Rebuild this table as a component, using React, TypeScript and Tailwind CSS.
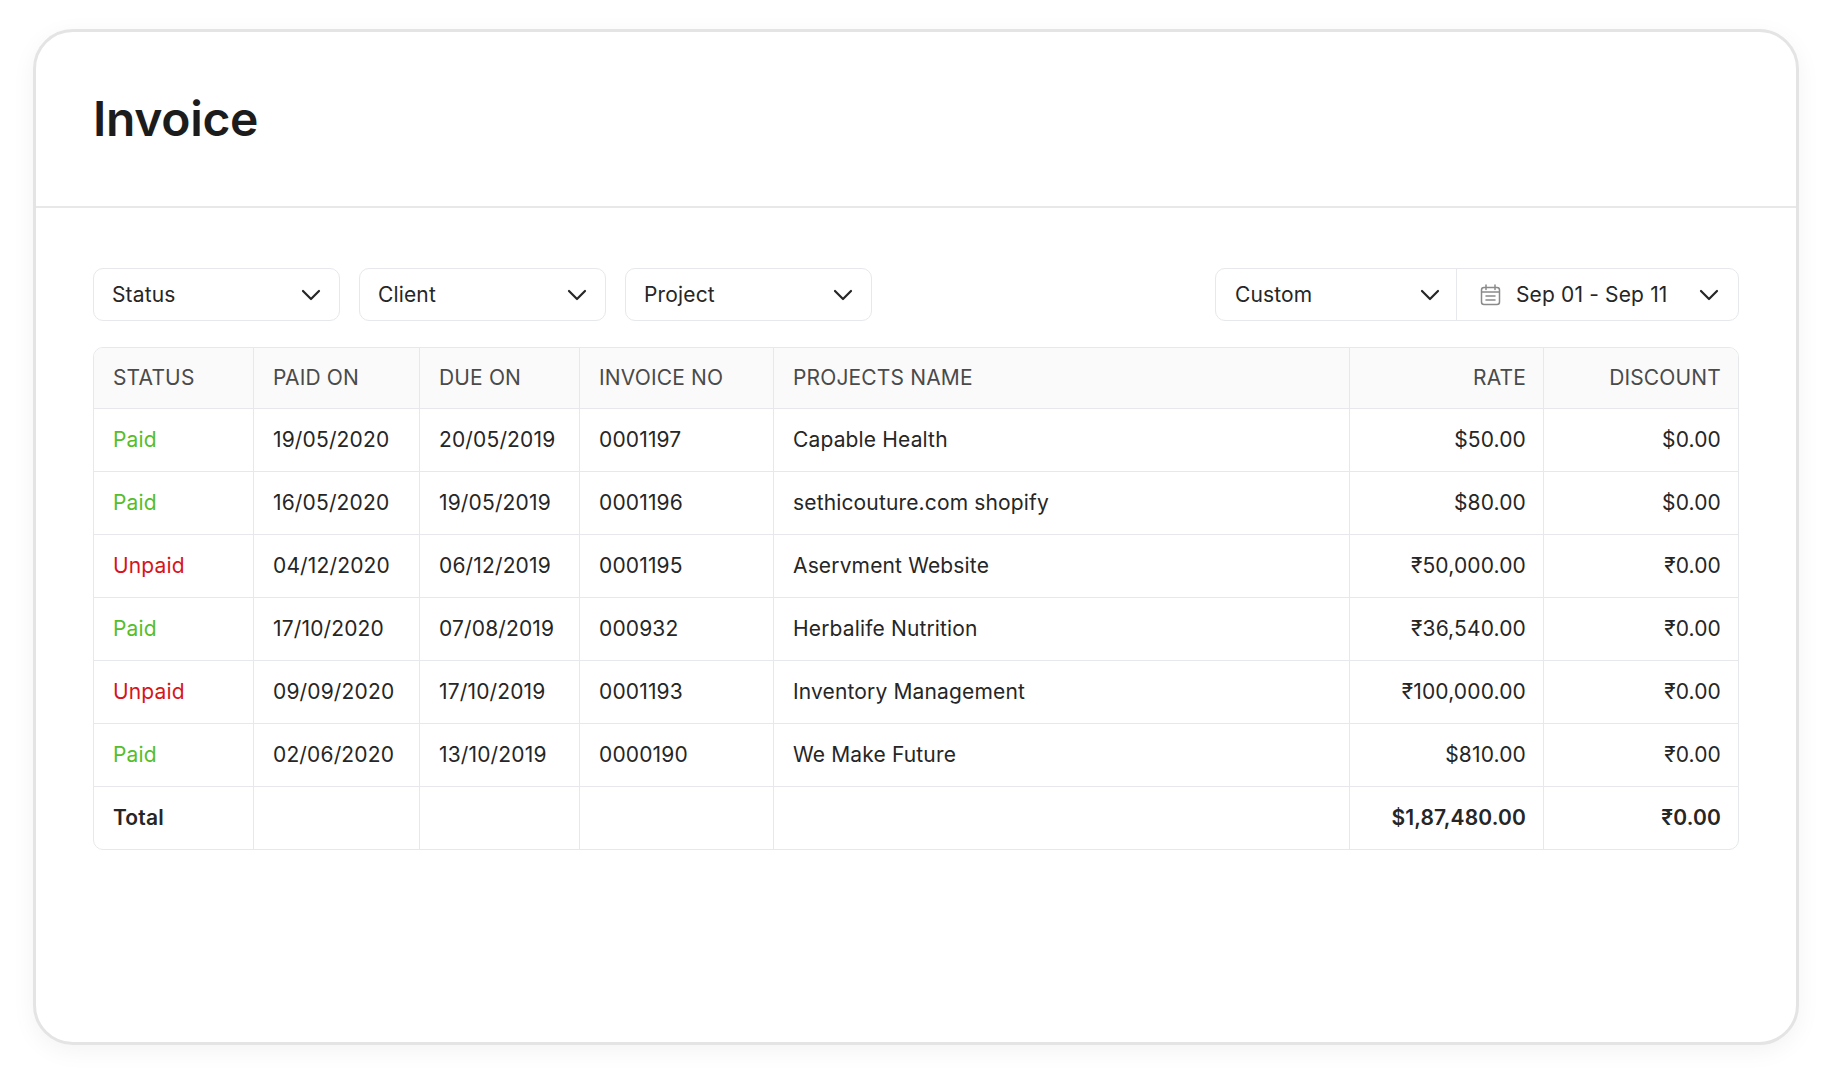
import React from "react";

const Chevron = () => (
  <svg width="20" height="12" viewBox="0 0 20 12" fill="none" className="shrink-0">
    <path d="M2 2 L10 10 L18 2" stroke="#262626" strokeWidth="2.2" strokeLinecap="round" strokeLinejoin="round" />
  </svg>
);

const CalendarIcon = () => (
  <svg width="21" height="22" viewBox="0 0 21 22" fill="none" className="shrink-0">
    <rect x="1.5" y="3.5" width="18" height="17" rx="2.5" stroke="#8a8a8a" strokeWidth="1.5" />
    <path d="M6 1 V5.5 M15 1 V5.5" stroke="#8a8a8a" strokeWidth="1.5" strokeLinecap="round" />
    <path d="M1.5 8 H19.5" stroke="#8a8a8a" strokeWidth="1.5" />
    <path d="M6 12 H15 M6 16 H15" stroke="#8a8a8a" strokeWidth="1.5" strokeLinecap="round" />
  </svg>
);

const Select = ({ label }: { label: string }) => (
  <div className="w-[247px] h-[53px] border-[1.5px] border-[#e6e8eb] rounded-[10px] flex items-center justify-between pl-[18px] pr-[18px] bg-white">
    <span className="text-[21px] tracking-[0.15px] text-[#262626]">{label}</span>
    <Chevron />
  </div>
);

type Row = {
  status: "Paid" | "Unpaid";
  paid: string;
  due: string;
  inv: string;
  name: string;
  rate: string;
  disc: string;
};

const rows: Row[] = [
  { status: "Paid", paid: "19/05/2020", due: "20/05/2019", inv: "0001197", name: "Capable Health", rate: "$50.00", disc: "$0.00" },
  { status: "Paid", paid: "16/05/2020", due: "19/05/2019", inv: "0001196", name: "sethicouture.com shopify", rate: "$80.00", disc: "$0.00" },
  { status: "Unpaid", paid: "04/12/2020", due: "06/12/2019", inv: "0001195", name: "Aservment Website", rate: "₹50,000.00", disc: "₹0.00" },
  { status: "Paid", paid: "17/10/2020", due: "07/08/2019", inv: "000932", name: "Herbalife Nutrition", rate: "₹36,540.00", disc: "₹0.00" },
  { status: "Unpaid", paid: "09/09/2020", due: "17/10/2019", inv: "0001193", name: "Inventory Management", rate: "₹100,000.00", disc: "₹0.00" },
  { status: "Paid", paid: "02/06/2020", due: "13/10/2019", inv: "0000190", name: "We Make Future", rate: "$810.00", disc: "₹0.00" },
];

const grid = "grid grid-cols-[160px_166px_160px_194px_1fr_194px_194px]";
const cell = "flex items-center px-[19px] border-r border-[#e6e8eb]";
const cellR = "flex items-center justify-end pl-[19px] pr-[17px] border-r border-[#e6e8eb]";
const cellLast = "flex items-center justify-end pl-[19px] pr-[17px]";

export default function App() {
  return (
    <div
      className="w-full h-[1085px] bg-white pl-[33px] pt-[29px]"
      style={{ fontFamily: 'Inter, "Noto Sans", "Liberation Sans", sans-serif' }}
    >
      <div className="w-[1766px] h-[1016px] bg-white border-[3px] border-[#e4e4e4] rounded-[40px] shadow-[0_6px_24px_rgba(0,0,0,0.05)] overflow-hidden">
        <div className="h-[176px] flex items-center pl-[57px] border-b-2 border-[#e8e8e8]">
          <h1 className="text-[48px] leading-none font-semibold text-[#1c1c1c] tracking-[-0.3px]">Invoice</h1>
        </div>

        <div className="pl-[57px] pr-[57px] pt-[60px] tracking-[0.15px]">
          <div className="flex items-center justify-between">
            <div className="flex gap-[19px]">
              <Select label="Status" />
              <Select label="Client" />
              <Select label="Project" />
            </div>
            <div className="flex h-[53px] border-[1.5px] border-[#e6e8eb] rounded-[10px] bg-white">
              <div className="w-[241px] flex items-center justify-between pl-[19px] pr-[16px] border-r-[1.5px] border-[#e6e8eb]">
                <span className="text-[21px] text-[#262626]">Custom</span>
                <Chevron />
              </div>
              <div className="w-[281px] flex items-center pl-[23px] pr-[19px]">
                <CalendarIcon />
                <span className="text-[21px] text-[#262626] ml-[15px] flex-1">Sep 01 - Sep 11</span>
                <Chevron />
              </div>
            </div>
          </div>

          <div className="mt-[26px] border-[1.5px] border-[#e6e8eb] rounded-[10px] overflow-hidden">
            <div className={`${grid} h-[61px] bg-[#fafafa] border-b border-[#e6e8eb] text-[21px] text-[#4a4a4a]`}>
              <div className={cell}>STATUS</div>
              <div className={cell}>PAID ON</div>
              <div className={cell}>DUE ON</div>
              <div className={cell}>INVOICE NO</div>
              <div className={cell}>PROJECTS NAME</div>
              <div className={cellR}>RATE</div>
              <div className={cellLast}>DISCOUNT</div>
            </div>
            {rows.map((r, i) => (
              <div key={i} className={`${grid} h-[63px] border-b border-[#e6e8eb] text-[21px] text-[#262626]`}>
                <div className={`${cell} ${r.status === "Paid" ? "text-[#56bd2a]" : "text-[#d8141c]"}`}>{r.status}</div>
                <div className={cell}>{r.paid}</div>
                <div className={cell}>{r.due}</div>
                <div className={cell}>{r.inv}</div>
                <div className={cell}>{r.name}</div>
                <div className={cellR}>{r.rate}</div>
                <div className={cellLast}>{r.disc}</div>
              </div>
            ))}
            <div className={`${grid} h-[62px] text-[21px] text-[#262626] font-semibold`}>
              <div className={cell}>Total</div>
              <div className={cell}></div>
              <div className={cell}></div>
              <div className={cell}></div>
              <div className={cell}></div>
              <div className={cellR}>$1,87,480.00</div>
              <div className={cellLast}>₹0.00</div>
            </div>
          </div>
        </div>
      </div>
    </div>
  );
}
